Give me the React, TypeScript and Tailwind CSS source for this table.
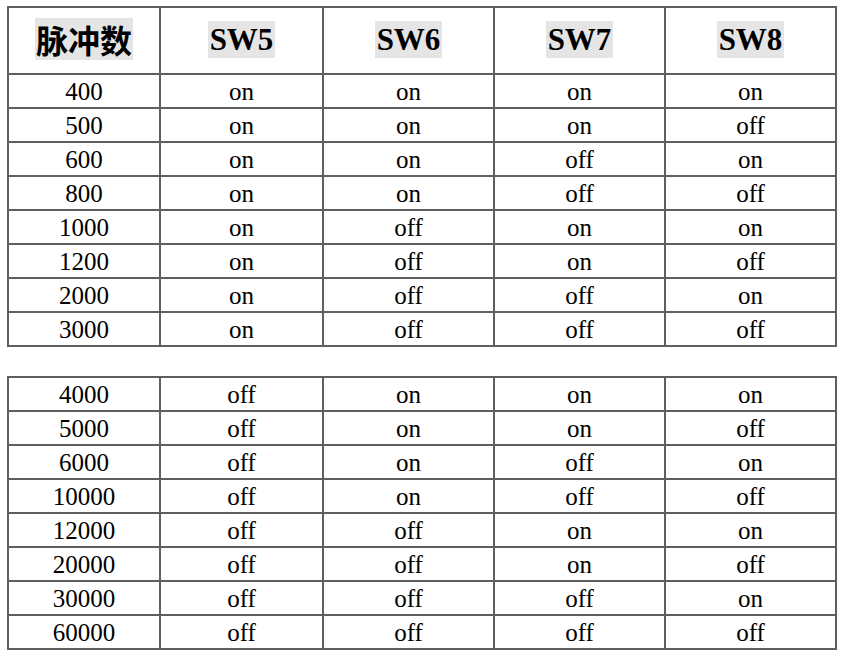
const top = [
  ['400', 'on', 'on', 'on', 'on'],
  ['500', 'on', 'on', 'on', 'off'],
  ['600', 'on', 'on', 'off', 'on'],
  ['800', 'on', 'on', 'off', 'off'],
  ['1000', 'on', 'off', 'on', 'on'],
  ['1200', 'on', 'off', 'on', 'off'],
  ['2000', 'on', 'off', 'off', 'on'],
  ['3000', 'on', 'off', 'off', 'off'],
];

const bottom = [
  ['4000', 'off', 'on', 'on', 'on'],
  ['5000', 'off', 'on', 'on', 'off'],
  ['6000', 'off', 'on', 'off', 'on'],
  ['10000', 'off', 'on', 'off', 'off'],
  ['12000', 'off', 'off', 'on', 'on'],
  ['20000', 'off', 'off', 'on', 'off'],
  ['30000', 'off', 'off', 'off', 'on'],
  ['60000', 'off', 'off', 'off', 'off'],
];

const headers = ['SW5', 'SW6', 'SW7', 'SW8'];

function Cols() {
  return (
    <colgroup>
      <col className="w-[152px]" />
      <col className="w-[163px]" />
      <col className="w-[171px]" />
      <col className="w-[171px]" />
      <col className="w-[171px]" />
    </colgroup>
  );
}

function Rows({ rows }: { rows: string[][] }) {
  return (
    <>
      {rows.map((r) => (
        <tr key={r[0]}>
          {r.map((v, i) => (
            <td
              key={i}
              className="h-[34px] p-0 border-2 border-[#5f5f5f] text-center align-middle leading-none"
            >
              {v}
            </td>
          ))}
        </tr>
      ))}
    </>
  );
}

export default function App() {
  return (
    <div
      className="w-[844px] h-[657px] bg-white pl-[7px] pt-[6px] text-black text-[25px]"
      style={{ fontFamily: '"Liberation Serif", "Times New Roman", serif' }}
    >
      <table className="table-fixed border-collapse w-[828px]">
        <Cols />
        <thead>
          <tr>
            <th className="h-[67px] p-0 border-2 border-[#5f5f5f] text-center align-middle">
              <span
                className="inline-block bg-[#e5e5e5] px-px text-[32px] leading-[42px] font-bold"
                style={{ fontFamily: '"Noto Sans CJK SC", sans-serif' }}
              >
                脉冲数
              </span>
            </th>
            {headers.map((h) => (
              <th key={h} className="h-[67px] p-0 border-2 border-[#5f5f5f] text-center align-middle">
                <span className="inline-block bg-[#e5e5e5] px-[2px] text-[31px] leading-[37px] font-bold">
                  {h}
                </span>
              </th>
            ))}
          </tr>
        </thead>
        <tbody>
          <Rows rows={top} />
        </tbody>
      </table>

      <table className="table-fixed border-collapse w-[828px] mt-[29px]">
        <Cols />
        <tbody>
          <Rows rows={bottom} />
        </tbody>
      </table>
    </div>
  );
}
